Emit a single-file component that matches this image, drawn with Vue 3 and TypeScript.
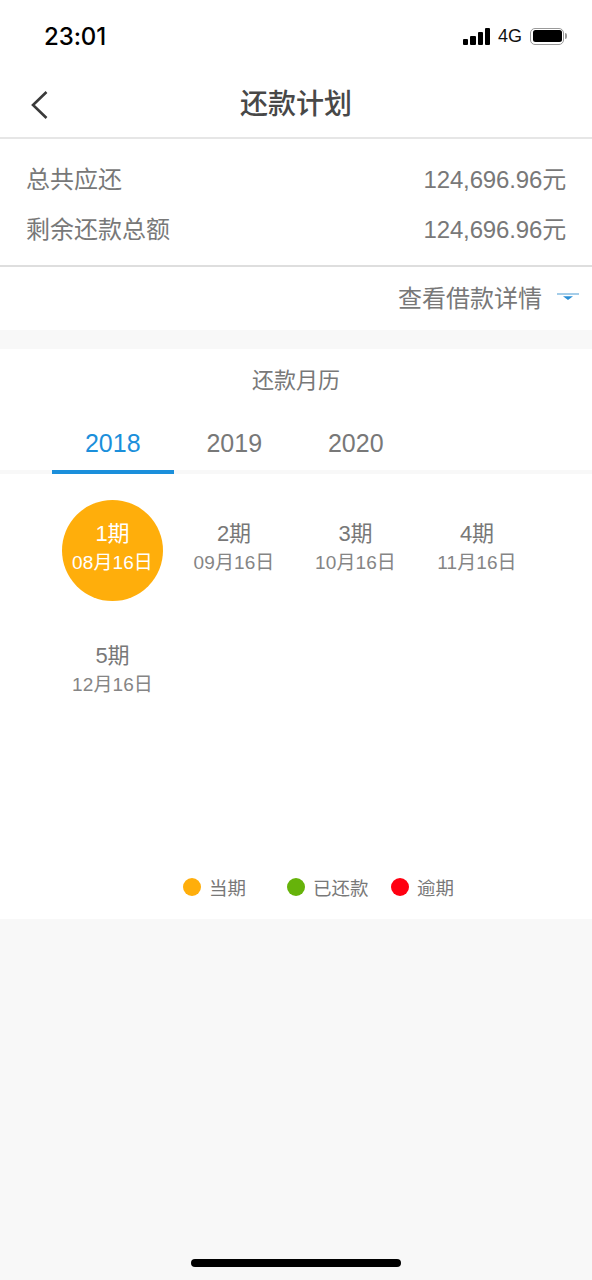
<script setup lang="ts">
const summary = [
  { label: '总共应还', value: '124,696.96元' },
  { label: '剩余还款总额', value: '124,696.96元' },
]
const years = ['2018', '2019', '2020']
const periods = [
  { n: '1期', d: '08月16日', current: true },
  { n: '2期', d: '09月16日', current: false },
  { n: '3期', d: '10月16日', current: false },
  { n: '4期', d: '11月16日', current: false },
  { n: '5期', d: '12月16日', current: false },
]
const legend = [
  { label: '当期', cls: 'orange' },
  { label: '已还款', cls: 'green' },
  { label: '逾期', cls: 'red' },
]
</script>

<template>
  <div class="page">
    <div class="white">
      <div class="status">
        <span class="time">23:01</span>
        <div class="status-right">
          <div class="signal"><i class="b1"></i><i class="b2"></i><i class="b3"></i><i class="b4"></i></div>
          <span class="net">4G</span>
          <div class="battery"><div class="fill"></div></div>
          <div class="nub"></div>
        </div>
      </div>
      <div class="nav">
        <svg class="back" width="20" height="30" viewBox="0 0 20 30">
          <path d="M16.5 2 L3 15 L16.5 28" fill="none" stroke="#3a3a3a" stroke-width="2.6" />
        </svg>
        <span class="title">还款计划</span>
      </div>
      <div class="summary">
        <div v-for="s in summary" :key="s.label" class="sum-row">
          <span>{{ s.label }}</span><span class="val">{{ s.value }}</span>
        </div>
      </div>
      <div class="detail">
        <span>查看借款详情</span>
        <svg width="22" height="8" viewBox="0 0 22 8" class="caret">
          <path d="M0 1 H22" stroke="#7db8e0" stroke-width="1.4" />
          <path d="M6 3.2 H16 L11 7 Z" fill="#2a8fd6" />
        </svg>
      </div>
    </div>
    <div class="gap"></div>
    <div class="calendar">
      <div class="cal-title">还款月历</div>
      <div class="tabs">
        <div v-for="(y, i) in years" :key="y" class="tab" :class="{ active: i === 0 }">{{ y }}</div>
      </div>
      <div class="grid">
        <div v-for="p in periods" :key="p.n" class="cell" :class="{ current: p.current }">
          <span class="n">{{ p.n }}</span>
          <span class="d">{{ p.d }}</span>
        </div>
      </div>
      <div class="legend">
        <div v-for="l in legend" :key="l.label" class="leg" :class="l.cls">
          <i class="dot"></i><span>{{ l.label }}</span>
        </div>
      </div>
    </div>
    <div class="rest"><div class="home"></div></div>
  </div>
</template>

<style scoped>
.page {
  width: 592px;
  height: 1280px;
  display: flex;
  flex-direction: column;
  background: #f8f8f8;
  font-family: "Liberation Sans", "Noto Sans CJK SC", sans-serif;
  color: #787878;
  overflow: hidden;
}
.white { background: #fff; }
.status {
  height: 74px;
  box-sizing: border-box;
  padding: 0 25px 2px 44px;
  display: flex;
  align-items: center;
  justify-content: space-between;
}
.time { font-size: 24px; font-weight: 500; color: #000; font-family: Inter, "Liberation Sans", sans-serif; letter-spacing: -0.1px; }
.status-right { display: flex; align-items: center; }
.signal { display: flex; align-items: flex-end; gap: 2px; height: 17px; margin-right: 8px; }
.signal i { width: 5.2px; background: #000; border-radius: 1px; display: block; }
.b1 { height: 6px; } .b2 { height: 9px; } .b3 { height: 13px; } .b4 { height: 17px; }
.net { font-size: 18px; color: #111; margin-right: 8px; }
.battery {
  width: 34px; height: 17px; box-sizing: border-box;
  border: 1.5px solid #999; border-radius: 5px; padding: 1.5px;
}
.fill { width: 100%; height: 100%; background: #000; border-radius: 2.5px; }
.nub { width: 2px; height: 6px; background: #999; border-radius: 0 2px 2px 0; margin-left: 1px; }
.nav {
  height: 65px;
  box-sizing: border-box;
  padding-bottom: 7px;
  border-bottom: 2px solid #e6e6e6;
  display: flex;
  align-items: center;
  justify-content: center;
  position: relative;
}
.back { position: absolute; left: 30px; top: 16px; }
.title { font-size: 28px; font-weight: 500; color: #484848; }
.summary {
  height: 128px;
  box-sizing: border-box;
  padding: 13px 26px 0;
  border-bottom: 2px solid #dedede;
  font-size: 24px;
}
.sum-row { display: flex; justify-content: space-between; height: 50px; align-items: center; }
.val { letter-spacing: -0.15px; }
.detail {
  height: 63px;
  display: flex;
  align-items: center;
  justify-content: flex-end;
  padding-right: 13px;
  font-size: 24px;
  padding-bottom: 4px;
  box-sizing: border-box;
}
.caret { margin-left: 15px; }
.gap { height: 19px; }
.calendar { background: #fff; height: 570px; display: flex; flex-direction: column; }
.cal-title { font-size: 22px; text-align: center; height: 63px; line-height: 64px; }
.tabs {
  display: flex;
  padding-left: 52px;
  height: 58px;
  border-bottom: 4px solid #f8f8f8;
}
.tab { width: 121.5px; text-align: center; font-size: 25px; line-height: 62px; height: 58px; }
.tab.active { color: #1b8fdb; border-bottom: 4px solid #1b8fdb; }
.grid {
  display: grid;
  grid-template-columns: repeat(4, 121.5px);
  grid-auto-rows: 122px;
  padding: 26px 0 0 52px;
  height: 397px;
  box-sizing: border-box;
}
.cell {
  width: 101px; height: 101px;
  margin: 0 10px;
  box-sizing: border-box;
  padding-bottom: 6px;
  border-radius: 50%;
  display: flex; flex-direction: column; align-items: center; justify-content: center;
}
.n { font-size: 22px; line-height: 30px; }
.d { font-size: 19px; line-height: 26px; margin-top: 1px; white-space: nowrap; letter-spacing: 0.1px; color: #858585; }
.current { background: #ffae0b; color: #fff; }
.current .d { color: #fff; }
.legend { display: flex; padding-left: 183px; height: 32px; align-items: center; font-size: 18.5px; }
.leg { display: flex; align-items: center; }
.leg span { margin-left: 8px; }
.orange { width: 104px; } .green { width: 104px; }
.dot { width: 18px; height: 18px; border-radius: 50%; display: block; }
.orange .dot { background: #ffae0b; } .green .dot { background: #66b30a; } .red .dot { background: #ff0011; }
.rest { flex: 1; position: relative; }
.home { position: absolute; left: 191px; bottom: 13px; width: 210px; height: 8px; border-radius: 4px; background: #000; }
</style>
